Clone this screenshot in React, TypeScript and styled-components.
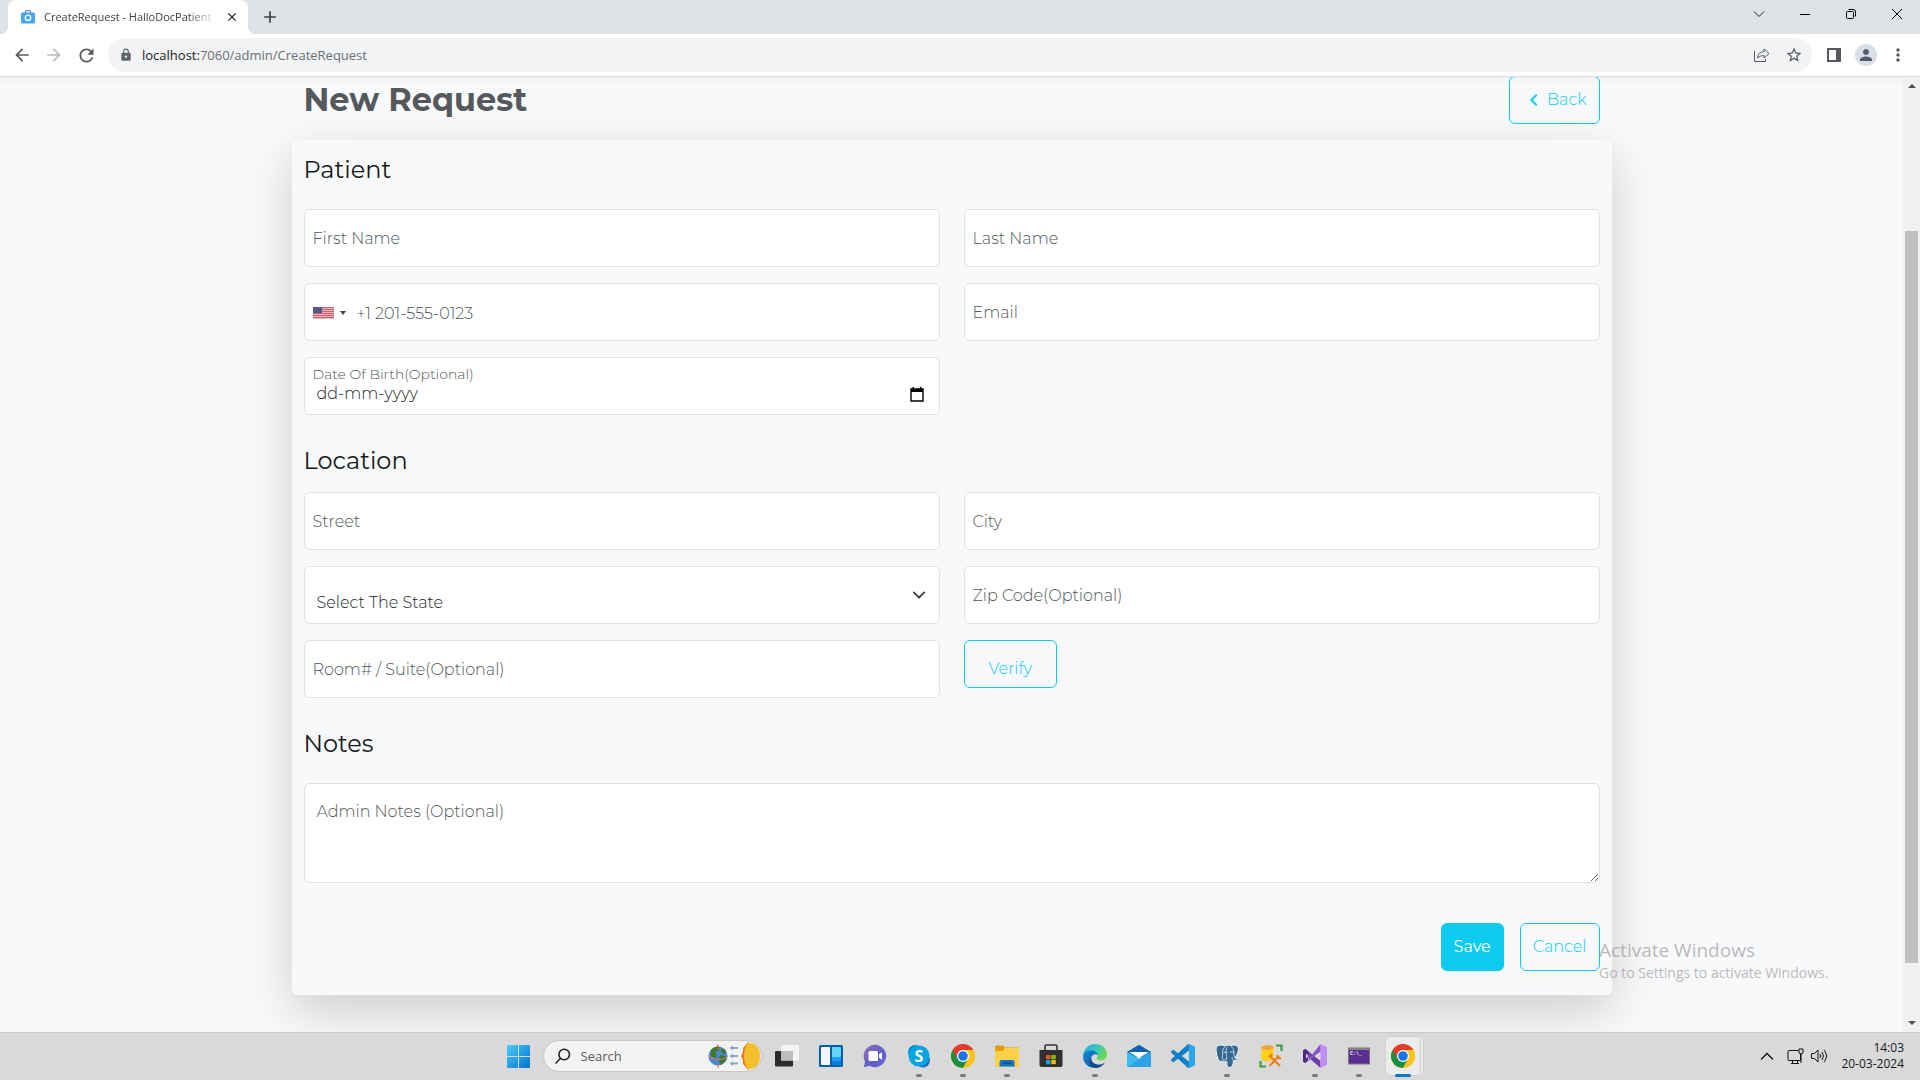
import React from "react";
import styled, { createGlobalStyle, css } from "styled-components";
import { MdArrowBack, MdArrowForward, MdRefresh, MdLock, MdStarBorder, MdMoreVert, MdPerson, MdChevronLeft, MdClose, MdAdd } from "react-icons/md";

const sans = `Montserrat, Inter, sans-serif`;
const system = `"Segoe UI", "Open Sans", "Noto Sans", sans-serif`;
const cyan = "#0dcaf0";

const GlobalStyle = createGlobalStyle`
  *, *::before, *::after { box-sizing: border-box; }
  body { margin: 0; background: #f8f9fb; }
  button, input, select, textarea { font: inherit; color: inherit; margin: 0; }
  svg { display: block; flex: none; }
`;

const Desktop = styled.div`
  height: 100vh;
  display: flex;
  flex-direction: column;
  font-family: ${system};
  overflow: hidden;
`;

const PlainButton = styled.button`
  border: 0;
  padding: 0;
  background: none;
  display: flex;
  align-items: center;
  justify-content: center;
`;

/* Browser chrome */

const TabStrip = styled.header`
  flex: none;
  height: 34px;
  background: #dee1e6;
  display: flex;
  align-items: stretch;
  padding-left: 8px;
`;

const Tab = styled.div`
  position: relative;
  width: 240px;
  background: #fff;
  border-radius: 8px 8px 0 0;
  display: flex;
  align-items: center;
  padding: 0 9px 0 13px;
  font-size: 11px;
  color: #3c4043;
  &::before, &::after {
    content: "";
    position: absolute;
    bottom: 0;
    width: 8px;
    height: 8px;
  }
  &::before { left: -8px; background: radial-gradient(circle at 0 0, #dee1e6 8px, #fff 8px); }
  &::after { right: -8px; background: radial-gradient(circle at 100% 0, #dee1e6 8px, #fff 8px); }
`;

const TabTitle = styled.span`
  flex: 1;
  margin: 0 9px;
  line-height: 16px;
  white-space: nowrap;
  mask-image: linear-gradient(to right, #000 84%, transparent);
`;

const NewTab = styled(PlainButton)`
  width: 28px;
  margin-left: 8px;
  color: #3c4043;
`;

const WindowControls = styled.div`
  margin-left: auto;
  display: flex;
  height: 28px;
`;

const WindowButton = styled(PlainButton)`
  width: 46px;
`;

const Toolbar = styled.div`
  flex: none;
  height: 43px;
  background: #fff;
  border-bottom: 1px solid #dadce0;
  display: flex;
  align-items: center;
  padding: 0 6px;
  color: #5f6368;
`;

const NavButton = styled(PlainButton)<{ $dim?: boolean }>`
  width: 32px;
  height: 32px;
  color: ${(p) => (p.$dim ? "#b9bbbe" : "#55595e")};
`;

const AddressBar = styled.div`
  flex: 1;
  height: 34px;
  margin: 0 6px;
  padding: 0 2px 0 11px;
  border-radius: 17px;
  background: #f1f3f4;
  display: flex;
  align-items: center;
`;

const Url = styled.span`
  flex: 1;
  margin-left: 9px;
  font-size: 13px;
  line-height: 20px;
  color: #6b6f74;
  b { font-weight: 400; color: #202124; }
`;

const Avatar = styled.span`
  width: 22px;
  height: 22px;
  border-radius: 50%;
  background: #dadfe6;
  color: #515c73;
  display: grid;
  place-items: center;
`;

/* Page */

const Viewport = styled.div`
  flex: 1;
  min-height: 0;
  display: flex;
  background: #f8f9fb;
  overflow: hidden;
`;

const Page = styled.main`
  flex: 1;
  overflow: hidden;
  font-family: ${sans};
  font-size: 16px;
  font-weight: 300;
  line-height: 24px;
  color: #212529;
  box-shadow: inset 0 8px 8px -6px rgba(0, 0, 0, 0.05);
`;

const Container = styled.div`
  max-width: 1320px;
  margin: -1px auto 0;
`;

const PageHeader = styled.div`
  display: flex;
  align-items: center;
  justify-content: space-between;
  padding: 0 12px;
  margin-bottom: 16px;
`;

const Title = styled.h1`
  margin: 0;
  font-size: 32px;
  line-height: 40px;
  font-weight: 700;
  color: #55595c;
`;

const Button = styled.button<{ $solid?: boolean; $low?: boolean; $wide?: boolean }>`
  height: 48px;
  padding: 0 ${(p) => (p.$wide ? 24 : 12)}px;
  border: 1px solid ${cyan};
  border-radius: 6px;
  background: ${(p) => (p.$solid ? cyan : "transparent")};
  color: ${(p) => (p.$solid ? "#fff" : cyan)};
  font-weight: ${(p) => (p.$solid ? 400 : 300)};
  display: inline-flex;
  align-items: center;
  justify-content: center;
  gap: 1px;
  ${(p) => p.$low && css`padding-top: 10px;`}
`;

const Card = styled.form`
  padding: 16px 12px 24px;
  border-radius: 6px;
  background: #f8f9fb;
  box-shadow: 0 16px 48px rgba(0, 0, 0, 0.175);
`;

const Heading = styled.h2<{ $first?: boolean; $tight?: boolean }>`
  margin: ${(p) => (p.$first ? 0 : 32)}px 0 ${(p) => (p.$tight ? 18 : 26)}px;
  font-size: 24px;
  line-height: 27px;
  font-weight: 400;
  color: #16191c;
`;

const Fields = styled.div`
  display: grid;
  grid-template-columns: repeat(2, minmax(0, 1fr));
  gap: 16px 24px;
  align-items: start;
`;

const box = css`
  width: 100%;
  border: 1px solid #dee2e6;
  border-radius: 6px;
  background: #fff;
  outline: none;
`;

const FieldBox = styled.div`
  display: grid;
  height: 58px;
  > * { grid-area: 1 / 1; }
`;

const Input = styled.input<{ $floated?: boolean; $phone?: boolean }>`
  ${box}
  height: 58px;
  padding: ${(p) => (p.$floated ? "14px 12px 0" : p.$phone ? "2px 12px 0 52px" : "2px 12px 0")};
  &::placeholder { color: ${(p) => (p.$floated ? "#212529" : "#50565b")}; opacity: 1; }
`;

const Label = styled.label<{ $floated?: boolean }>`
  align-self: ${(p) => (p.$floated ? "start" : "center")};
  justify-self: start;
  padding: ${(p) => (p.$floated ? "7px 0 0 9px" : "2px 0 0 9px")};
  font-size: ${(p) => (p.$floated ? 14 : 16)}px;
  line-height: ${(p) => (p.$floated ? 20 : 24)}px;
  color: #50565b;
  pointer-events: none;
`;

const CalendarButton = styled(PlainButton)`
  place-self: end;
  margin: 0 15px 12px 0;
  width: 16px;
  height: 18px;
`;

const Select = styled.select`
  ${box}
  height: 58px;
  padding: 16px 12px 0;
  appearance: none;
`;

const SelectArrow = styled.svg`
  place-self: center end;
  margin-right: 14px;
  pointer-events: none;
`;

const CountryButton = styled(PlainButton)`
  place-self: center start;
  padding: 2px 0 0 9px;
  gap: 6px;
`;

const Notes = styled.textarea`
  ${box}
  display: block;
  height: 100px;
  padding: 16px 12px;
  resize: vertical;
  &::placeholder { color: #50565b; opacity: 1; }
`;

const Actions = styled.div`
  display: flex;
  justify-content: flex-end;
  gap: 16px;
  margin-top: 40px;
`;

const ScrollTrack = styled.div`
  flex: none;
  width: 17px;
  background: #f1f1f1;
  display: flex;
  flex-direction: column;
  align-items: center;
  padding: 7px 0;
`;

const ScrollThumb = styled.div`
  flex: 1;
  width: 13px;
  margin: 143px 0 58px;
  background: #c1c1c1;
`;

const Watermark = styled.aside`
  position: absolute;
  right: 85px;
  bottom: 97px;
  width: 236px;
  color: rgba(130, 130, 130, 0.55);
  font-size: 14px;
  line-height: 20px;
  pointer-events: none;
  strong { display: block; font-weight: 400; font-size: 19px; line-height: 26px; }
`;

/* Taskbar */

const Taskbar = styled.footer`
  flex: none;
  height: 48px;
  box-shadow: inset 0 1px #c9c9c9;
  background: #d9d9d9;
  display: grid;
  grid-template-columns: 1fr auto 1fr;
  align-items: center;
`;

const Dock = styled.nav`
  grid-column: 2;
  display: flex;
  align-items: center;
`;

const SearchBox = styled.label`
  width: 219px;
  height: 32px;
  margin: 0 3px;
  padding: 0 0 0 11px;
  border: 1px solid #c6c6c6;
  border-radius: 16px;
  background: #f3f3f3;
  display: flex;
  align-items: center;
  input {
    flex: 1;
    min-width: 0;
    margin-left: 10px;
    padding: 0;
    border: 0;
    background: none;
    outline: none;
    font-size: 13px;
    line-height: 20px;
  }
  input::placeholder { color: #5c5c5c; opacity: 1; }
`;

const DockButton = styled(PlainButton)<{ $running?: boolean; $active?: boolean }>`
  position: relative;
  width: 44px;
  height: 48px;
  &::after {
    content: "";
    display: ${(p) => (p.$running || p.$active ? "block" : "none")};
    position: absolute;
    bottom: 3px;
    width: ${(p) => (p.$active ? 16 : 6)}px;
    height: 3px;
    border-radius: 2px;
    background: ${(p) => (p.$active ? "#0078d4" : "#7a7a7a")};
  }
  ${(p) => p.$active && css`
    &::before {
      content: "";
      position: absolute;
      inset: 5px;
      border-radius: 4px;
      background: #ececec;
      box-shadow: 0 0 0 1px #cfcfcf, 3px 0 0 0 #ececec, 4px 0 0 0 #cfcfcf;
    }
    svg { position: relative; }
  `}
`;

const Tray = styled.div`
  justify-self: end;
  display: flex;
  align-items: center;
  padding-right: 16px;
`;

const TrayButton = styled(PlainButton)`
  width: 24px;
  height: 32px;
  &:first-child { margin-right: 4px; }
`;

const Clock = styled.time`
  margin-left: 10px;
  font-size: 12px;
  line-height: 16px;
  color: #1b1b1b;
  text-align: right;
  span { display: block; }
`;

/* Drawings */

const Svg24 = ({ children }: { children: React.ReactNode }) => (
  <svg width="24" height="24" viewBox="0 0 24 24" aria-hidden="true">{children}</svg>
);

const Favicon = () => (
  <svg width="14" height="14" viewBox="0 0 14 14" aria-hidden="true">
    <path d="M4.5 3V1.5q0-.8.8-.8h3.4q.8 0 .8.8V3" fill="none" stroke="#6f8da5" strokeWidth="1.3" />
    <rect x="0" y="2.5" width="14" height="11" rx="1.6" fill="#42a5f5" />
    <circle cx="7" cy="7.8" r="2.7" fill="none" stroke="#fff" strokeWidth="1.4" />
  </svg>
);

const Flag = () => (
  <svg width="21" height="12" viewBox="0 0 21 12" aria-hidden="true">
    <rect width="21" height="12" fill="#e8b4ba" />
    {[0, 2, 4, 6, 8, 10].map((y) => <rect key={y} y={y} width="21" height="1" fill="#c9606e" />)}
    <rect width="9" height="6" fill="#55568a" />
  </svg>
);

const Chrome = () => (
  <Svg24>
    <circle cx="12" cy="12" r="12" fill="#fcc934" />
    <path d="M12 12 1.6 6A12 12 0 0 0 12 24l5.2-9z" fill="#1e8e3e" />
    <path d="M12 12 17.2 15 12 24a12 12 0 0 0 10.4-18H12z" fill="#fcc31e" />
    <path d="M1.6 6a12 12 0 0 1 20.8 0H12a6 6 0 0 0-5.2 9z" fill="#e33b2e" />
    <circle cx="12" cy="12" r="6" fill="#fff" />
    <circle cx="12" cy="12" r="4.8" fill="#1a73e8" />
  </Svg24>
);

const StartIcon = () => (
  <Svg24>
    <defs>
      <linearGradient id="start" x1="0" y1="0" x2="24" y2="24" gradientUnits="userSpaceOnUse">
        <stop stopColor="#4fd0fb" /><stop offset="1" stopColor="#0072d0" />
      </linearGradient>
    </defs>
    <path fill="url(#start)" d="M1 2q0-1 1-1h10v11H1zM13 1h10q1 0 1 1v10H13zM1 13h11v11H2q-1 0-1-1zM13 13h11v10q0 1-1 1H13z" />
  </Svg24>
);

const SearchArt = () => (
  <svg width="54" height="28" viewBox="0 0 54 28" aria-hidden="true">
    <circle cx="11" cy="14" r="9.5" fill="#4c86c6" />
    <path d="M4 8q5-5 9-3l-2 4-3 1 2 3-2 3-4-2zM13 13l6 1-1 5-4 4-2-4zM15 6l4 3-2 3-3-2z" fill="#3f7a24" />
    <path d="M1.5 14q9 7 19 1" fill="none" stroke="#f0735a" strokeWidth="1" />
    <path d="M11 2v6M11 22v4" stroke="#e8593b" strokeWidth="1" />
    {[6, 14, 21.5].map((y) => (
      <path key={y} d={`M22.5 ${y}l3.500-2.500v1.500h5v2h-5v1.500z`} fill="#8ca7c4" />
    ))}
    <path d="M41 0l-3 4-2 2 0 4-2 4 2 4 0 4 2 2 3 4z" fill="#e67a1e" />
    <path d="M41 .5q-8 13.500 0 27 12-1 12-13.500T41 .5z" fill="#f4c02c" />
  </svg>
);

const TaskViewIcon = () => (
  <Svg24>
    <rect y="7" width="18" height="15.5" rx="1" fill="#2b2b2b" />
    <rect x="6" y="1" width="18" height="15.5" rx="1" fill="#f4f4f4" />
    <rect x="6" y="7" width="12" height="9.5" fill="#bdbdbd" />
  </Svg24>
);

const WidgetsIcon = () => (
  <Svg24>
    <rect y="1" width="24" height="22" rx="1.5" fill="#0560a8" />
    <rect x="2" y="3" width="9" height="18" rx="1" fill="#f4f6fa" />
    <rect x="13" y="3" width="9" height="10" rx="1" fill="#68d3fb" />
    <path d="M13 13h9v4h-9z" fill="#1b9ff0" />
    <path d="M13 17h9v4h-9z" fill="#0a7ce0" />
  </Svg24>
);

const ChatIcon = () => (
  <Svg24>
    <defs>
      <linearGradient id="chat" x1="0" y1="0" x2="1" y2="1">
        <stop stopColor="#9a6db5" /><stop offset=".6" stopColor="#5b5fc7" /><stop offset="1" stopColor="#6d6fe0" />
      </linearGradient>
    </defs>
    <path d="M12 .8a11.200 11.200 0 1 1-5.500 21L1 23.200l1-5.800A11.200 11.200 0 0 1 12 .8z" fill="url(#chat)" />
    <rect x="5.5" y="7" width="9.5" height="10" rx="1.5" fill="#fff" />
    <path d="M16 10.500l3-2.500v8l-3-2.500z" fill="#fff" />
  </Svg24>
);

const SkypeLetter = styled.text`
  font: 700 16px "Open Sans", sans-serif;
  fill: #fff;
`;

const SkypeIcon = () => (
  <Svg24>
    <circle cx="8" cy="8" r="7" fill="#0a89cf" />
    <circle cx="16" cy="16.5" r="7" fill="#1b6fc0" />
    <circle cx="12" cy="12" r="10.5" fill="#00a5e3" />
    <SkypeLetter x="12" y="18" textAnchor="middle">S</SkypeLetter>
  </Svg24>
);

const FolderIcon = () => (
  <Svg24>
    <path d="M0 3q0-1.500 1.500-1.500H8l2 2H22.500q1.500 0 1.500 1.500V21q0 1.500-1.500 1.500h-21Q0 22.500 0 21z" fill="#e0a100" />
    <path d="M0 7h7.500L10 4h14v17q0 1.500-1.500 1.500h-21Q0 22.500 0 21z" fill="#ffd04a" />
    <path d="M4.500 22.500V18q0-2 2-2h11q2 0 2 2v4.500z" fill="#1273c4" />
    <path d="M8 18.500h8v1.500H8z" fill="#0a4f94" />
  </Svg24>
);

const StoreIcon = () => (
  <Svg24>
    <path d="M6 7V2.500Q6 1 7.500 1h9Q18 1 18 2.500V7" fill="none" stroke="#333" strokeWidth="1.6" />
    <path d="M.5 6h23v15q0 2-2 2h-19q-2 0-2-2z" fill="#303030" />
    <path d="M7 11h4.500v4.200H7z" fill="#f25022" /><path d="M12.300 11h4.500v4.200h-4.500z" fill="#7fba00" />
    <path d="M7 16h4.500v4.200H7z" fill="#00a4ef" /><path d="M12.300 16h4.500v4.200h-4.500z" fill="#ffb900" />
  </Svg24>
);

const EdgeIcon = () => (
  <Svg24>
    <defs>
      <linearGradient id="edgeTop" x1="0" y1="0" x2="1" y2=".5">
        <stop stopColor="#2aa5df" /><stop offset=".5" stopColor="#30c5c8" /><stop offset="1" stopColor="#6ddb50" />
      </linearGradient>
      <linearGradient id="edgeLow" x1="0" y1="0" x2="1" y2="1">
        <stop stopColor="#1687d9" /><stop offset="1" stopColor="#0c59a4" />
      </linearGradient>
    </defs>
    <path d="M.3 10.500C1.200 4.500 6 0 12 0c7 0 12 4.800 12 10.200 0 4-3 6-6 6-3.500 0-4.300-1.200-4.300-1.800 0-.6 1-1 1-2.700 0-2.300-2.500-4-5.700-4-4 0-7.500 1.500-8.700 2.800z" fill="url(#edgeTop)" />
    <path d="M.2 11C1 8 4.500 6.500 8.500 6.500c4 0 6 2.500 6 4.500-2-1.500-6.500-.5-6.500 4.500 0 4.500 4 7.500 6.500 7.800C7 25.500 0 20 0 12.500z" fill="url(#edgeLow)" />
    <path d="M8.200 13C7.500 18.500 12.500 21 17 20.500c2.500-.3 4-1.500 5-2.300C20 22 16.500 24 12.500 24 6 23 5 15.500 8.200 13z" fill="#114a8b" />
  </Svg24>
);

const MailIcon = () => (
  <Svg24>
    <path d="M0 8 12 .8 24 8v5H0z" fill="#0a5fae" />
    <path d="M0 8l12 6.500L24 8v15H0z" fill="#3cbcf0" />
    <path d="M0 23 24 8v15z" fill="#2ea3e6" />
    <path d="M2 8h20l-10 6z" fill="#fff" />
  </Svg24>
);

const VsCodeIcon = () => (
  <Svg24>
    <path fill="#1380c6" d="M23.150 2.587 18.210.21a1.494 1.494 0 0 0-1.705.29l-9.460 8.630-4.120-3.128a.999.999 0 0 0-1.276.057L.327 7.261A1 1 0 0 0 .326 8.740L3.899 12 .326 15.260a1 1 0 0 0 .001 1.479L1.650 17.940a.999.999 0 0 0 1.276.057l4.120-3.128 9.460 8.630a1.492 1.492 0 0 0 1.704.290l4.942-2.377A1.500 1.500 0 0 0 24 20.060V3.939a1.500 1.500 0 0 0-.850-1.352zm-5.146 14.861L10.826 12l7.178-5.448z" />
    <path fill="#2aa7ee" d="M18 .2 23.150 2.600Q24 3 24 4v16q0 1-.850 1.400L18 23.800z" />
  </Svg24>
);

const DatabaseToolsIcon = () => (
  <Svg24>
    <path d="M17 1.500h5.500V7" fill="none" stroke="#3f9c46" strokeWidth="2.2" />
    <path d="M1.500 17v5.500H7" fill="none" stroke="#3f9c46" strokeWidth="2.2" />
    <path d="M2.500 3h12v12q-6 4-12 1z" fill="#fcd116" />
    <ellipse cx="8.5" cy="3.5" rx="6" ry="2.5" fill="#f0a33c" />
    <path d="M11 12l10 10M20 12 10.500 22" stroke="#ef7d1a" strokeWidth="2" />
    <path d="M9.500 13l4-3M18 11l1 3 3 .5" fill="none" stroke="#ef7d1a" strokeWidth="2" />
  </Svg24>
);

const VisualStudioIcon = () => (
  <Svg24>
    <path d="M0 6.500 2.500 5l15 12v7L5 13l-2.500 6L0 17.500z" fill="#6a3da8" />
    <path d="M0 6.500 2.500 5 5 7.500v9L2.500 19 0 17.500z" fill="#52278a" />
    <path d="M2.500 19 17.500 0l.5 7z" fill="#8a55cc" />
    <path d="M17.500 0 24 3v18l-6.500 3z" fill="#c08cf5" />
    <path d="M3 9.500v5L5.500 12z" fill="#d9d9d9" />
  </Svg24>
);

const PromptLabel = styled.text`
  font: 700 5px "Liberation Mono", monospace;
  fill: #fff;
`;

const TerminalIcon = () => (
  <Svg24>
    <rect x="1.5" y="4" width="21" height="16" fill="#5c2d91" />
    <path d="M1.500 4h21v2h-21z" fill="#8a8a8a" />
    <rect x="1.5" y="4" width="21" height="16" fill="none" stroke="#77747c" />
    <PromptLabel x="3" y="11">C:\_</PromptLabel>
  </Svg24>
);

const PostgresIcon = () => (
  <Svg24>
    <path
      d="M1 6q0-5 5-5 2 0 4 1 3-1.500 6-.5Q18 .8 20 1q3.500.8 3.500 4 0 4-3.500 9 2 .5 3.500 0-1.500 2.500-5 2.500-.5 6.500-3.500 7-3.500.3-4-6-1.500.8-3.500-.5Q5 18.500 3.500 16 1.500 12 1 6z"
      fill="#336791" stroke="#eef2f5" strokeWidth="1" strokeLinejoin="round"
    />
    <path
      d="M9.500 3Q7 5.500 7.500 9q.5 3-.5 5.500 2 2.500 4.500.5.500-2-.5-5.500Q10.500 6 12 3.500M16.500 2.500q3 3 2.500 6.500-.3 2.500.8 4.500M19 8.500q-2-1.500-4-.5M9 8.500q1.500-1 3-.3M12 17v4M18.500 16.500q-2-1-1.500-3"
      fill="none" stroke="#dfe7ee" strokeWidth=".8" strokeLinecap="round"
    />
  </Svg24>
);

type DockItem = { name: string; icon: React.ComponentType; running?: boolean; active?: boolean };

const dockItems: DockItem[] = [
  { name: "Task view", icon: TaskViewIcon },
  { name: "Widgets", icon: WidgetsIcon },
  { name: "Chat", icon: ChatIcon },
  { name: "Skype", icon: SkypeIcon, running: true },
  { name: "Chrome", icon: Chrome, running: true },
  { name: "File Explorer", icon: FolderIcon, running: true },
  { name: "Store", icon: StoreIcon },
  { name: "Edge", icon: EdgeIcon, running: true },
  { name: "Mail", icon: MailIcon },
  { name: "Visual Studio Code", icon: VsCodeIcon },
  { name: "pgAdmin", icon: PostgresIcon, running: true },
  { name: "Database tools", icon: DatabaseToolsIcon },
  { name: "Visual Studio", icon: VisualStudioIcon, running: true },
  { name: "Terminal", icon: TerminalIcon, running: true },
  { name: "Chrome window", icon: Chrome, active: true },
];

const TextField = ({ id, label }: { id: string; label: string }) => (
  <FieldBox>
    <Input id={id} type="text" />
    <Label htmlFor={id}>{label}</Label>
  </FieldBox>
);

const BrowserChrome = () => (
  <>
    <TabStrip>
      <Tab>
        <Favicon />
        <TabTitle>CreateRequest - HalloDocPatient</TabTitle>
        <PlainButton aria-label="Close tab"><MdClose size={14} color="#202124" /></PlainButton>
      </Tab>
      <NewTab aria-label="New tab"><MdAdd size={20} /></NewTab>
      <WindowControls>
        <WindowButton aria-label="Search tabs">
          <svg width="12" height="12" viewBox="0 0 12 12"><path d="M1 3.500 6 8.500l5-5" fill="none" stroke="#222" /></svg>
        </WindowButton>
        <WindowButton aria-label="Minimize">
          <svg width="10" height="10" viewBox="0 0 10 10"><path d="M0 5.500h10" stroke="#000" /></svg>
        </WindowButton>
        <WindowButton aria-label="Restore">
          <svg width="10" height="10" viewBox="0 0 10 10" fill="none" stroke="#000">
            <rect x=".5" y="2.5" width="7" height="7" rx="1" /><path d="M2.500.5H7q2.500 0 2.500 2.500v4.500" />
          </svg>
        </WindowButton>
        <WindowButton aria-label="Close window">
          <svg width="10" height="10" viewBox="0 0 10 10"><path d="M0 0l10 10M10 0 0 10" stroke="#000" /></svg>
        </WindowButton>
      </WindowControls>
    </TabStrip>
    <Toolbar>
      <NavButton aria-label="Back in history"><MdArrowBack size={20} /></NavButton>
      <NavButton aria-label="Forward" $dim><MdArrowForward size={20} /></NavButton>
      <NavButton aria-label="Reload"><MdRefresh size={21} /></NavButton>
      <AddressBar>
        <MdLock size={14} />
        <Url><b>localhost:</b>7060/admin/CreateRequest</Url>
        <NavButton aria-label="Share">
          <svg width="16" height="16" viewBox="0 0 16 16" fill="none" stroke="currentColor">
            <path d="M.5 4v10.500h11V12M3.500 11q.5-6 6.500-6.500V2l5 4.500L10 11V8.500q-4 0-6.500 2.500z" />
          </svg>
        </NavButton>
        <NavButton aria-label="Bookmark"><MdStarBorder size={18} /></NavButton>
      </AddressBar>
      <NavButton aria-label="Side panel">
        <svg width="14" height="14" viewBox="0 0 14 14"><path d="M1 1h12v12H1z" fill="none" stroke="#55595e" strokeWidth="2" /><path d="M9 0h5v14H9z" fill="#55595e" /></svg>
      </NavButton>
      <NavButton aria-label="Profile"><Avatar><MdPerson size={18} /></Avatar></NavButton>
      <NavButton aria-label="Menu"><MdMoreVert size={20} /></NavButton>
    </Toolbar>
  </>
);

const RequestForm = () => (
  <Card onSubmit={(e) => e.preventDefault()}>
    <Heading $first>Patient</Heading>
    <Fields>
      <TextField id="firstName" label="First Name" />
      <TextField id="lastName" label="Last Name" />
      <FieldBox>
        <Input $phone type="tel" aria-label="Phone number" placeholder="+1 201-555-0123" />
        <CountryButton type="button" aria-label="Country">
          <Flag />
          <svg width="6" height="4" viewBox="0 0 6 4"><path d="M0 0h6L3 4z" fill="#444" /></svg>
        </CountryButton>
      </FieldBox>
      <TextField id="email" label="Email" />
      <FieldBox>
        <Input $floated id="dob" type="text" placeholder="dd-mm-yyyy" />
        <Label $floated htmlFor="dob">Date Of Birth(Optional)</Label>
        <CalendarButton type="button" aria-label="Open calendar">
          <svg width="14" height="15" viewBox="0 0 14 15">
            <path d="M1 2h12v12H1z" fill="none" stroke="#000" strokeWidth="1.4" />
            <path d="M1 2h12v3H1zM2.500 0H4v2H2.500zM10 0h1.500v2H10z" fill="#000" />
          </svg>
        </CalendarButton>
      </FieldBox>
    </Fields>
    <Heading $tight>Location</Heading>
    <Fields>
      <TextField id="street" label="Street" />
      <TextField id="city" label="City" />
      <FieldBox>
        <Select aria-label="State"><option>Select The State</option></Select>
        <SelectArrow width="14" height="14" viewBox="0 0 16 16">
          <path d="m2 5 6 6 6-6" fill="none" stroke="#343a40" strokeWidth="2" strokeLinecap="round" strokeLinejoin="round" />
        </SelectArrow>
      </FieldBox>
      <TextField id="zip" label="Zip Code(Optional)" />
      <TextField id="room" label="Room# / Suite(Optional)" />
      <div><Button type="button" $wide $low>Verify</Button></div>
    </Fields>
    <Heading>Notes</Heading>
    <Notes aria-label="Admin notes" placeholder="Admin Notes (Optional)" />
    <Actions>
      <Button type="submit" $solid>Save</Button>
      <Button type="button">Cancel</Button>
    </Actions>
  </Card>
);

export default function App() {
  return (
    <Desktop>
      <GlobalStyle />
      <BrowserChrome />
      <Viewport>
        <Page>
          <Container>
            <PageHeader>
              <Title>New Request</Title>
              <Button type="button"><MdChevronLeft size={24} />Back</Button>
            </PageHeader>
            <RequestForm />
          </Container>
        </Page>
        <ScrollTrack>
          <svg width="8" height="4" viewBox="0 0 8 4"><path d="M0 4h8L4 0z" fill="#505050" /></svg>
          <ScrollThumb />
          <svg width="8" height="4" viewBox="0 0 8 4"><path d="M0 0h8L4 4z" fill="#505050" /></svg>
        </ScrollTrack>
      </Viewport>
      <Watermark><strong>Activate Windows</strong>Go to Settings to activate Windows.</Watermark>
      <Taskbar>
        <Dock aria-label="Taskbar">
          <DockButton aria-label="Start"><StartIcon /></DockButton>
          <SearchBox>
            <svg width="16" height="16" viewBox="0 0 16 16" fill="none" stroke="#222" strokeWidth="1.6" strokeLinecap="round">
              <circle cx="9.2" cy="6.5" r="5.3" /><path d="M5.300 10.500 1 15" />
            </svg>
            <input type="search" aria-label="Search" placeholder="Search" />
            <SearchArt />
          </SearchBox>
          {dockItems.map(({ name, icon: Icon, running, active }) => (
            <DockButton key={name} aria-label={name} $running={running} $active={active}><Icon /></DockButton>
          ))}
        </Dock>
        <Tray>
          <TrayButton aria-label="Hidden icons">
            <svg width="14" height="8" viewBox="0 0 14 8"><path d="M1 7.500 7 1.500l6 6" fill="none" stroke="#111" strokeWidth="1.3" /></svg>
          </TrayButton>
          <TrayButton aria-label="Network">
            <svg width="17" height="17" viewBox="0 0 17 17" fill="none" stroke="#111">
              <path d="M11 2.500H2q-1 0-1 1v8q0 1 1 1h11.500V6M5.500 12.500V15M10.500 12.500V15M4 15.500h8" />
              <path d="M12 1h4v4q-2 2-4 0zM14 6v9" />
            </svg>
          </TrayButton>
          <TrayButton aria-label="Volume">
            <svg width="17" height="16" viewBox="0 0 17 16" fill="none" stroke="#111">
              <path d="M.5 6q0-.5.5-.5h2.500L7 2v12l-3.500-3.500H1q-.5 0-.5-.5zM9 6q1.500 2 0 4M11 4q3 4 0 8M13 2q5 6 0 12" />
            </svg>
          </TrayButton>
          <Clock><span>14:03</span><span>20-03-2024</span></Clock>
        </Tray>
      </Taskbar>
    </Desktop>
  );
}
